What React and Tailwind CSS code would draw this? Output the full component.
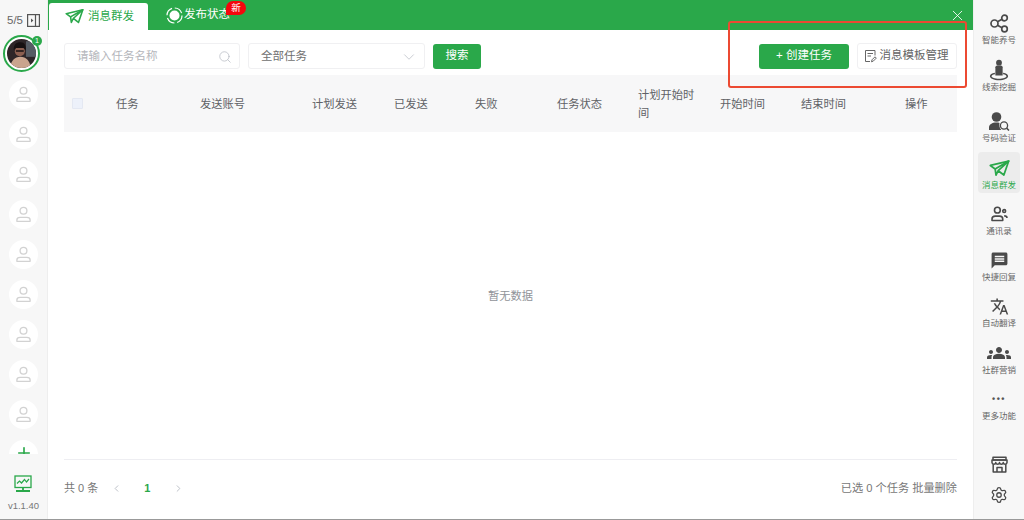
import React from "react";
import { Search, ChevronDown, ChevronLeft, ChevronRight, X, Settings, Plus } from "lucide-react";
import { MdMessage, MdTranslate, MdGroups } from "react-icons/md";

const FONT = "font-['Liberation_Sans','Noto_Sans_CJK_SC',sans-serif]";

const Plane = ({ size = 20, color = "#2aa84a" }) => (
  <svg width={size} height={size} viewBox="0 0 24 20" fill="none" stroke={color} strokeWidth="2" strokeLinejoin="round">
    <path d="M1.5 6.5 22.5 1.5 17 17.5 10.5 12.5 8 17.5 7 10.5Z" />
    <path d="M7 10.5 22.5 1.5 10.5 12.5" />
  </svg>
);

const Person = () => (
  <svg width="17" height="17" viewBox="0 0 18 18" fill="none" stroke="#d2d2d2" strokeWidth="1.4">
    <circle cx="9" cy="5" r="3.6" />
    <path d="M2 16.200v-1.400c0-1.700 1.500-2.800 3.400-2.800h7.200c1.900 0 3.400 1.100 3.400 2.800v1.400Z" strokeLinejoin="round" />
  </svg>
);

const ShareIcon = () => (
  <svg width="19" height="19" viewBox="0 0 19 19" fill="none" stroke="#4a4a4a" strokeWidth="1.700">
    <circle cx="4.500" cy="9.500" r="3.500" />
    <circle cx="14.500" cy="4" r="2.800" />
    <circle cx="14.500" cy="15" r="2.800" />
    <path d="M7.500 7.700 12 5.300M7.500 11.300 12 13.700" />
  </svg>
);

const PinPerson = () => (
  <svg width="20" height="23" viewBox="0 0 22 24" fill="#4a4a4a">
    <circle cx="11" cy="3.400" r="3.200" />
    <path d="M7 8.500a2 2 0 0 1 2-2h4a2 2 0 0 1 2 2v9H7z" />
    <path d="M6.500 14.600C3 15.200 1 16.700 1 18.400 1 20.600 5.400 22.800 11 22.800s10-2.200 10-4.400c0-1.700-2-3.200-5.500-3.800v1.500c2.400.4 3.700 1.300 3.700 2.300 0 1.300-3.600 2.700-8.200 2.700s-8.200-1.400-8.200-2.700c0-1 1.300-1.900 3.700-2.300z" />
  </svg>
);

const PersonSearch = () => (
  <svg width="21" height="19" viewBox="0 0 21 19" fill="#4a4a4a">
    <circle cx="7.500" cy="5" r="4.800" />
    <path d="M0 18v-2.500C0 12.500 3 10.500 7.500 10.500c1.200 0 2.200.1 3 .4-.6 2.600.1 5 1.800 7.100Z" />
    <circle cx="15" cy="13.500" r="3.600" fill="none" stroke="#4a4a4a" strokeWidth="1.300" />
    <path d="M17.600 16.100 20 18.500" fill="none" stroke="#4a4a4a" strokeWidth="1.500" />
  </svg>
);

const Contacts = () => (
  <svg width="17" height="16" viewBox="0 0 20 18" fill="none" stroke="#4a4a4a" strokeWidth="1.900">
    <circle cx="7.500" cy="4.500" r="3.400" />
    <path d="M1.200 16.600v-1.800c0-2 1.800-3.300 3.800-3.300h5c2 0 3.800 1.300 3.800 3.300v1.800Z" strokeLinejoin="round" />
    <circle cx="15.500" cy="5.500" r="1.700" />
    <path d="M15.500 11.200c1.800 0 3.300.8 3.300 2.400" />
  </svg>
);

const StoreIcon = () => (
  <svg width="17" height="17" viewBox="0 0 17 17" fill="none" stroke="#4a4a4a" strokeWidth="1.500" strokeLinejoin="round">
    <path d="M2 1.200h13v2.800H2z" />
    <path d="M1 4h15v2.600a1.900 1.900 0 0 1-3.750 0 1.900 1.900 0 0 1-3.750 0 1.900 1.900 0 0 1-3.750 0 1.900 1.900 0 0 1-3.750 0Z" />
    <path d="M2.200 8.500v7.500h12.600V8.500" />
    <path d="M6 16v-4.500h5V16" />
  </svg>
);

const PanelIcon = () => (
  <svg width="13" height="13" viewBox="0 0 13 13" fill="none" stroke="#555" strokeWidth="1.200">
    <rect x="0.600" y="0.600" width="11.800" height="11.800" />
    <path d="M8.500 0.600v11.800" />
    <path d="M4 4.500 6.400 6.500 4 8.500Z" fill="#555" stroke="none" />
  </svg>
);

const Monitor = () => (
  <svg width="18" height="18" viewBox="0 0 18 18" fill="none" stroke="#2aa84a" strokeWidth="1.300">
    <rect x="1" y="1" width="16" height="11.500" />
    <path d="M3 8.500 5.500 6l2 2 3-3.500L12.500 7 15 4" strokeWidth="1.200" />
    <path d="M9 12.500v3M2 16h14" strokeWidth="1.800" />
  </svg>
);

const Avatar = () => (
  <div className="relative mr-[4px] w-[37px] h-[37px] rounded-full border-2 border-[#2aa84a] bg-white flex items-center justify-center">
    <svg width="29" height="29" viewBox="0 0 26 26" className="rounded-full">
      <rect width="26" height="26" fill="#2e2628" />
      <rect x="17" y="2" width="9" height="14" fill="#565c64" />
      <path d="M3 26c0-6 4-10 9-10s9 4 9 10Z" fill="#c9a48e" />
      <circle cx="11.500" cy="11" r="4.500" fill="#8c5f50" />
      <path d="M6 10c0-5 2-7 6-7s5 3 5 7l-2-2H8Z" fill="#171112" />
      <path d="M8 10h7v1.500H8z" fill="#171112" />
    </svg>
    <span className="absolute -top-[1px] -right-[4px] w-[10px] h-[10px] rounded-full bg-[#2aa84a] text-white text-[7px] leading-[10px] text-center">1</span>
  </div>
);

const tools = [
  { icon: <ShareIcon />, label: "智能养号", cls: "h-[47px] pb-[5px]" },
  { icon: <PinPerson />, label: "线索挖掘", cls: "h-[47px] pb-[5px]" },
  { icon: <PersonSearch />, label: "号码验证", cls: "h-[51px] pb-[5px]" },
  { icon: <Plane size={21} />, label: "消息群发", cls: "mt-[3px] h-[41px] pb-[2px] bg-[#ececec]", active: true },
  { icon: <Contacts />, label: "通讯录", cls: "h-[49px] pb-[5px]" },
  { icon: <MdMessage size={19} color="#4a4a4a" />, label: "快捷回复", cls: "h-[46px] pb-[5px]" },
  { icon: <MdTranslate size={19} color="#4a4a4a" />, label: "自动翻译", cls: "h-[46px] pb-[5px]" },
  { icon: <MdGroups size={24} color="#4a4a4a" />, label: "社群营销", cls: "h-[47px] pb-[5px]" },
  { icon: <span className="text-[#555] text-[9px] font-bold tracking-[1.500px] leading-none">•••</span>, label: "更多功能", cls: "h-[46px] pb-[5px]" },
];

const columns = ["任务", "发送账号", "计划发送", "已发送", "失败", "任务状态", "计划开始时间", "开始时间", "结束时间", "操作"];
const colClasses = ["w-[84px]", "w-[112px]", "w-[82px]", "w-[81px]", "w-[82px]", "w-[81px]", "w-[82px]", "w-[81px]", "w-[104px]", "w-[52px]"];

export default function App() {
  return (
    <div className={`${FONT} w-[1024px] h-[520px] overflow-hidden relative flex flex-col bg-white text-[#606266]`}>
      <div className="flex flex-1 min-h-0">
        {/* left sidebar */}
        <aside className="w-[48px] shrink-0 bg-[#f7f7f7] border-r border-[#eeeeee] flex flex-col items-center">
          <div className="h-[34px] pt-[7px] flex items-center gap-[4px] text-[11.500px] text-[#666]">
            <span>5/5</span>
            <PanelIcon />
          </div>
          <div className="mt-[1px]"><Avatar /></div>
          <div className="h-[374px] overflow-hidden flex flex-col items-center gap-[11px] mt-[8px]">
            {Array.from({ length: 9 }).map((_, i) => (
              <div key={i} className="w-[29px] h-[29px] shrink-0 rounded-full bg-white flex items-center justify-center"><Person /></div>
            ))}
            <div className="w-[29px] h-[29px] shrink-0 rounded-full bg-white flex items-center justify-center"><Plus size={18} strokeWidth={2.200} color="#2aa84a" className="-mt-[4px]" /></div>
          </div>
          <div className="mt-auto flex flex-col items-center pb-[6px]">
            <Monitor />
            <span className="text-[9.500px] text-[#777] mt-[6px]">v1.1.40</span>
          </div>
        </aside>

        {/* main */}
        <main className="flex-1 min-w-0 flex flex-col">
          <header className="h-[30px] bg-[#2aa84a] flex items-end pl-[1px] pr-[7px] relative">
            <div className="w-[99px] h-[27px] bg-white rounded-t-[3px] flex items-center pl-[16px] gap-[4px] text-[#2aa84a] text-[11.500px]">
              <Plane size={19} />
              <span>消息群发</span>
            </div>
            <div className="relative ml-[18px] h-[30px] flex items-center gap-[1px] text-white text-[11.500px]">
              <svg width="17" height="17" viewBox="0 0 17 17" fill="none">
                <circle cx="8.500" cy="8.500" r="5" fill="white" />
                <circle cx="8.500" cy="8.500" r="7.500" stroke="white" strokeWidth="1.200" strokeDasharray="9 2.800" />
              </svg>
              <span>发布状态</span>
              <span className="absolute top-[1px] left-[60px] w-[20px] h-[14px] rounded-[7px] rounded-bl-none bg-[#f5060d] text-white text-[9.500px] leading-[13px] text-center">新</span>
            </div>
            <X size={17} strokeWidth={1.200} color="white" className="ml-auto self-center mt-[1px]" />
          </header>

          <div className="flex-1 min-h-0 flex flex-col px-[16px]">
            <div className="h-[26px] mt-[13px] flex items-center">
              <div className="w-[176px] h-[26px] border border-[#f0f0f2] rounded-[3px] flex items-center pl-[12px] pr-[7px] pt-[1px] text-[11.500px] text-[#b4b6bb]">
                <span>请输入任务名称</span>
                <Search size={14} strokeWidth={1.300} className="ml-auto" color="#b8bcc4" />
              </div>
              <div className="w-[177px] h-[26px] ml-[8px] border border-[#f0f0f2] rounded-[3px] flex items-center pl-[12px] pr-[6px] pt-[1px] text-[11.500px] text-[#707070]">
                <span>全部任务</span>
                <ChevronDown size={18} strokeWidth={1} className="ml-auto" color="#b8bcc4" />
              </div>
              <button className="w-[48px] h-[25px] ml-[8px] bg-[#2aa84a] rounded-[3px] text-white text-[11.500px]">搜索</button>
              <button className="w-[90px] h-[25px] ml-auto bg-[#2aa84a] rounded-[3px] text-white text-[11.500px]">+ 创建任务</button>
              <button className="w-[100px] h-[26px] ml-[8px] border border-[#f0f0f2] rounded-[3px] flex items-center justify-center gap-[3px] pr-[2px] text-[11.500px] text-[#666]">
                <svg width="13" height="14" viewBox="0 0 13 14" fill="none" stroke="#666" strokeWidth="1">
                  <path d="M6 12.500H1.500v-11h9.500v5" />
                  <path d="M3.500 4.500h5.500M3.500 7h3.500" />
                  <path d="M7.500 12.800 8 10.800l3-3 1.300 1.300-3 3Z" />
                </svg>
                <span>消息模板管理</span>
              </button>
            </div>

            <div className="h-[57px] mt-[6px] bg-[#f7f7f8] flex items-center text-[11.250px] text-[#606266]">
              <div className="w-[52px] pl-[8px] shrink-0">
                <div className="w-[11px] h-[11px] bg-[#edf1fa] border border-[#e4e8f2] rounded-[1px]" />
              </div>
              {columns.map((c, i) => (
                <div key={c} className={`${colClasses[i]} shrink-0 leading-[18px] ${i === 6 ? "pr-[20px]" : ""}`}>{c}</div>
              ))}
            </div>

            <div className="flex-1 flex items-center justify-center pt-[2px] text-[11.250px] text-[#909399]">暂无数据</div>

            <div className="h-[60px] border-t border-[#eeeef2] flex items-center text-[11px] text-[#777] pb-[3px]">
              <span>共 0 条</span>
              <ChevronLeft size={11} className="ml-[13px]" color="#b8bcc4" />
              <span className="ml-[22px] text-[#2aa84a] font-bold text-[11px]">1</span>
              <ChevronRight size={11} className="ml-[23px]" color="#b8bcc4" />
              <span className="ml-auto text-[11.200px]">已选 0 个任务 批量删除</span>
            </div>
          </div>
        </main>

        {/* right toolbar */}
        <aside className="w-[51px] shrink-0 bg-[#f7f7f7] border-l border-[#eeeeee] flex flex-col items-center pt-[4px] pb-[15px]">
          {tools.map((t) => (
            <div key={t.label} className={`${t.cls} w-[42px] shrink-0 flex flex-col items-center justify-end rounded-[4px]`}>
              <div className="h-[24px] flex items-center justify-center">{t.icon}</div>
              <span className={`text-[8.500px] leading-[11px] whitespace-nowrap ${t.active ? "text-[#2aa84a]" : "text-[#666]"}`}>{t.label}</span>
            </div>
          ))}
          <div className="mt-auto"><StoreIcon /></div>
          <Settings size={18} strokeWidth={1.700} color="#4a4a4a" className="mt-[13px]" />
        </aside>
      </div>
      <div className="h-[1px] bg-[#999] shrink-0" />

      {/* annotation */}
      <div className="absolute left-[728px] top-[21px] w-[239px] h-[67px] border-2 border-[#ec4a32] rounded-[3px] pointer-events-none" />
    </div>
  );
}
